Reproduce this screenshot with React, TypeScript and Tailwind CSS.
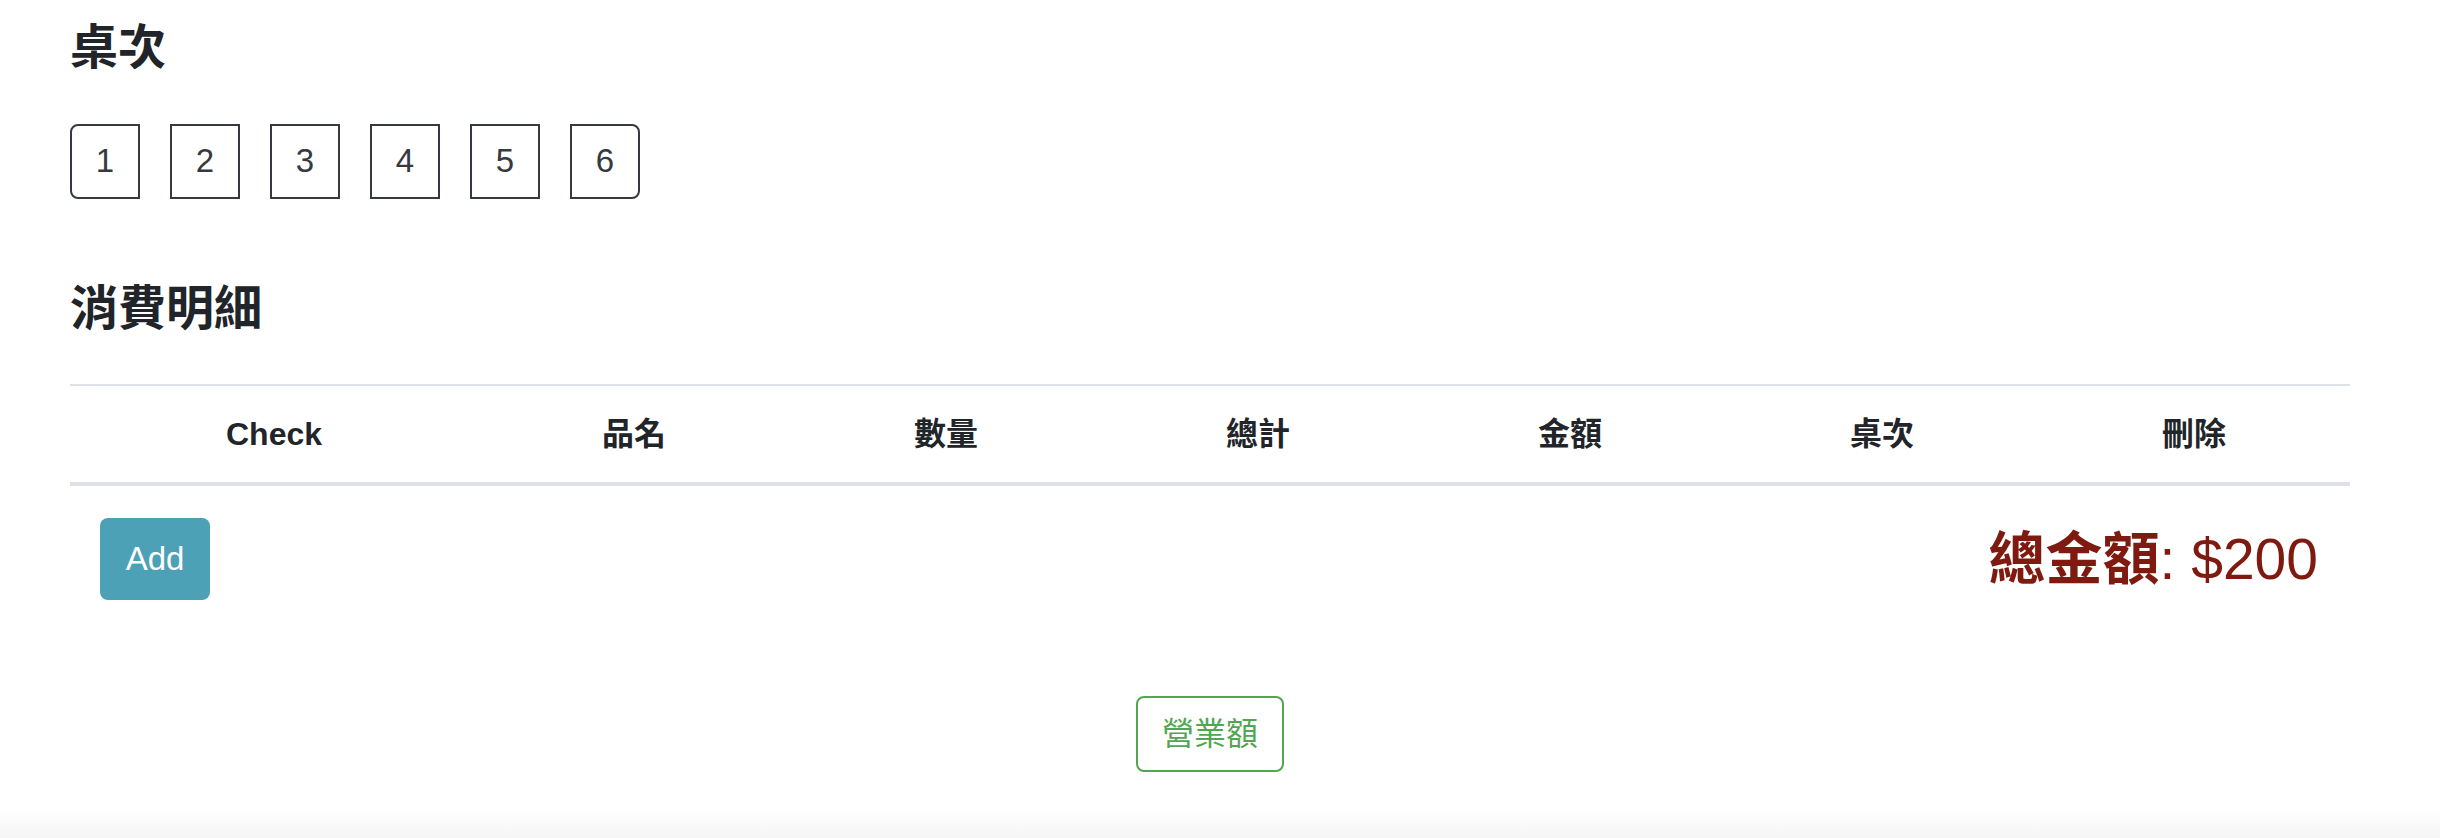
import clsx from 'clsx';

const tables = [1, 2, 3, 4, 5, 6];
const columns = ['Check', '品名', '數量', '總計', '金額', '桌次', '刪除'];

export default function App() {
  return (
    <div className="min-h-[838px] flex flex-col bg-white text-[#212529] font-['Liberation_Sans','Noto_Sans_CJK_TC',sans-serif]">
      <main className="flex-1 pl-[70px] pr-[90px] pt-[19px]">
        <h4 className="text-[48px] leading-[1.2] font-bold">桌次</h4>

        <div className="mt-[47px] flex gap-[30px]">
          {tables.map((n, i) => (
            <button
              key={n}
              className={clsx(
                'h-[75px] w-[70px] border-2 border-[#343a40] text-[33px] leading-[48px] text-[#343a40]',
                i === 0 && 'rounded-l-[8px]',
                i === tables.length - 1 && 'rounded-r-[8px]'
              )}
            >
              {n}
            </button>
          ))}
        </div>

        <h4 className="mt-[81px] text-[48px] leading-[1.2] font-bold">消費明細</h4>

        {/* 明細表 header */}
        <div className="mt-[47px] grid grid-cols-[408px_repeat(6,1fr)] border-t-2 border-b-4 border-[#dee2e6]">
          {columns.map((c) => (
            <div key={c} className="py-[24px] text-center text-[32px] leading-[48px] font-bold">
              {c}
            </div>
          ))}
        </div>

        <div className="mt-[32px] flex items-center justify-between pl-[30px] pr-[32px]">
          <button className="h-[82px] w-[110px] rounded-[8px] bg-[#4ca1b6] text-[33px] text-white">Add</button>
          <h3 className="text-[57px] leading-[1.2] font-medium text-[#7f1a10]">
            <span className="font-bold">總金額</span>: $200
          </h3>
        </div>

        <div className="mt-[96px] flex justify-center">
          <button className="h-[76px] rounded-[8px] border-2 border-[#52a652] px-[24px] text-[32px] leading-[48px] text-[#52a652]">
            營業額
          </button>
        </div>
      </main>
      <footer className="h-[30px] bg-gradient-to-b from-white to-[#f5f5f5]" />
    </div>
  );
}
